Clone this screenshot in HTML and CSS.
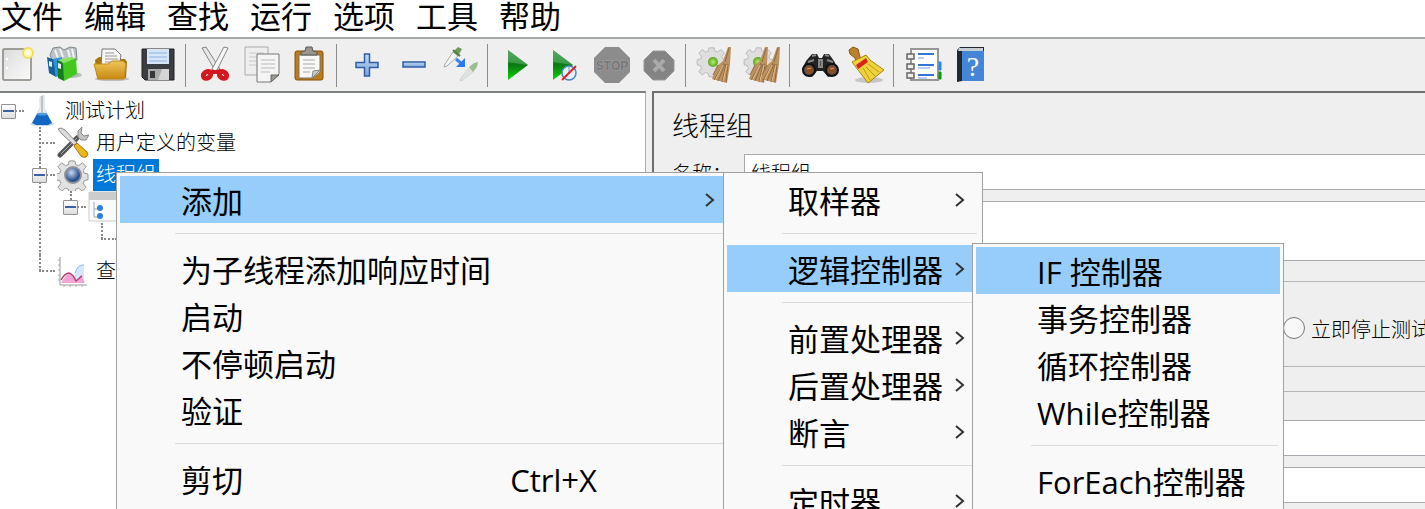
FILE: index.html
```
<!DOCTYPE html>
<html lang="zh-CN">
<head>
<meta charset="UTF-8" />
<meta name="viewport" content="width=device-width, initial-scale=1" />
<title>线程组</title>
<link rel="stylesheet" href="styles.css">
</head>
<body>

<!-- shared gradients and shapes -->
<svg class="defs" width="0" height="0" aria-hidden="true">
  <defs>
    <linearGradient id="paper" x1="0" y1="0" x2="1" y2="1"><stop offset="0" stop-color="#dcdcdc"/><stop offset="1" stop-color="#fbfbfb"/></linearGradient>
    <linearGradient id="gold" x1="0" y1="0" x2="0" y2="1"><stop offset="0" stop-color="#efc55c"/><stop offset="1" stop-color="#c98a10"/></linearGradient>
    <linearGradient id="green" x1="0" y1="0" x2="0" y2="1"><stop offset="0" stop-color="#3c9a4c"/><stop offset=".5" stop-color="#0a7a12"/><stop offset="1" stop-color="#08d808"/></linearGradient>
    <linearGradient id="blue" x1="0" y1="0" x2="0" y2="1"><stop offset="0" stop-color="#c3d9f2"/><stop offset="1" stop-color="#7ba7da"/></linearGradient>
    <radialGradient id="ball"><stop offset="0" stop-color="#b9ee6c"/><stop offset="1" stop-color="#57a51c"/></radialGradient>
    <radialGradient id="lens" cx=".4" cy=".35"><stop offset="0" stop-color="#c9d8ec"/><stop offset="1" stop-color="#27508f"/></radialGradient>
    <g id="gear">
      <path d="M13 1h6l1 4 3 1 4-3 4 4-3 4 1 3 4 1v6l-4 1-1 3 3 4-4 4-4-3-3 1-1 4h-6l-1-4-3-1-4 3-4-4 3-4-1-3-4-1v-6l4-1 1-3-3-4 4-4 4 3 3-1z"/>
    </g>
    <g id="twigs">
      <path d="M17 0l-5 14-6 5-5 13 15 4 3-19 1-17z" fill="#bd9261"/>
      <path d="M18 1l-4 14M13 16L3 33M14 17L7 34M15 17l-4 18M17 17l-2 18M7 18L2 28" stroke="#906a40" fill="none"/>
      <path d="M12 18L5 32M16 18l-4 16" stroke="#e1bd8c" fill="none"/>
    </g>
  </defs>
</svg>

<div class="app">
  <nav class="menubar">
    <button>文件</button>
    <button>编辑</button>
    <button>查找</button>
    <button>运行</button>
    <button>选项</button>
    <button>工具</button>
    <button>帮助</button>
  </nav>

  <div class="toolbar">
    <div class="group">
      <button aria-label="新建">
        <svg viewBox="0 0 36 36"><rect x="3" y="2" width="28" height="31" rx="1" fill="url(#paper)" stroke="#85857f" stroke-width="1.5"/><path d="M6 12h2M6 21h2" stroke="#fff" stroke-width="2"/><circle cx="28" cy="6" r="5" fill="#fff9b0" stroke="#f0e05e" stroke-width="2"/><circle cx="28" cy="6" r="2" fill="#fff"/></svg>
      </button>
      <button aria-label="模板">
        <svg viewBox="0 0 36 36"><ellipse cx="24" cy="28" rx="11" ry="3" fill="#bbb"/><path d="M3 8l3-7 7-1 4 3 6-3 6 1 1 12H5z" fill="#bcc3c7" stroke="#7d888d"/><path d="M8 3l3 8M13 2l3 8M21 3l2 8M25 2l2 9" stroke="#f4f4f4" stroke-width="2"/><path d="M0 10l8 3 1 17-7-4z" fill="#155f9c"/><path d="M6 12l9-2v18l-6 2z" fill="#3093da"/><path d="M10 13l7 3v18l-6-3z" fill="#19791d"/><path d="M16 16l13-5 1 16-13 7z" fill="#45c81d"/><path d="M11 16l3 1v5l-3-1zM2 14l3 1v5l-3-1z" fill="#dff0fa"/><path d="M17 16l12-5-6-1-12 3z" fill="#8be35f"/></svg>
      </button>
      <button aria-label="打开">
        <svg viewBox="0 0 36 36"><ellipse cx="18" cy="32" rx="17" ry="2" fill="#bbb"/><path d="M1 13l4-3h8l2 2h16l2 3-1 16H3z" fill="#a87713"/><path d="M8 2h13l6 6-2 14H7z" fill="#f6f6f6" stroke="#777"/><path d="M11 6h9M11 9h12M11 12h13M11 15h13" stroke="#999"/><path d="M0 17h14l4-3h11l3 3-2 15H4z" fill="url(#gold)" stroke="#c28a1b"/></svg>
      </button>
      <button aria-label="保存">
        <svg viewBox="0 0 36 36"><path d="M1 2h32v31H4l-3-3z" fill="#3a3d42" stroke="#222"/><rect x="6" y="2" width="22" height="15" fill="#d7e6f7"/><path d="M8 6h18M8 10h18M8 14h18" stroke="#8db1dc"/><rect x="7" y="22" width="21" height="11" fill="#aaa"/><path d="M17 33l4-11h7v11z" fill="#d5d5d5"/><rect x="9" y="24" width="5" height="7" fill="#34373c"/></svg>
      </button>
    </div>
    <span class="sep"></span>
    <div class="group">
      <button aria-label="剪切">
        <svg viewBox="0 0 36 36"><path d="M4 1l4-1 14 22-4 3z" fill="#e6e6e6" stroke="#858585"/><path d="M30 1l-4-1-12 22 4 3z" fill="#f6f6f6" stroke="#858585"/><ellipse cx="9" cy="28" rx="4" ry="3" transform="rotate(-35 9 28)" fill="#fff" stroke="#d31820" stroke-width="5"/><ellipse cx="25" cy="28" rx="4" ry="3" transform="rotate(35 25 28)" fill="#fff" stroke="#d31820" stroke-width="5"/><path d="M8 22l9 1 9-1-6 5h-6z" fill="#d31820"/></svg>
      </button>
      <button aria-label="复制">
        <svg viewBox="0 0 36 36"><path d="M0 0h23v28H0z" fill="#eee" stroke="#aaa"/><path d="M4 6h15M4 10h15M4 14h15M4 18h12" stroke="#c8c8c8"/><path d="M12 7h22v20l-8 8H12z" fill="#f5f5f5" stroke="#777"/><path d="M16 13h14M16 17h14M16 21h14M16 25h9" stroke="#bbb"/><path d="M26 35v-7h8z" fill="#9a9a92" stroke="#666"/></svg>
      </button>
      <button aria-label="粘贴">
        <svg viewBox="0 0 36 36"><rect x="3" y="4" width="28" height="29" rx="2" fill="#bd7b19" stroke="#84520a"/><path d="M7 8h21v17l-7 6H7z" fill="#f8f8f8" stroke="#777"/><path d="M9 8V5l4-1 1-4h6l1 4 4 1v3z" fill="#96968c" stroke="#5b5b55"/><path d="M11 13h12M11 17h12M11 21h12M11 25h7" stroke="#aaa"/><path d="M20 31l1-7 7-1z" fill="#ccc" stroke="#888"/></svg>
      </button>
    </div>
    <span class="sep"></span>
    <div class="group">
      <button aria-label="展开">
        <svg viewBox="0 0 36 36"><path d="M15.500 7h5v8.500H29v5h-8.500V29h-5v-8.500H7v-5h8.500z" fill="url(#blue)" stroke="#2c5fa8" stroke-width="1.500"/></svg>
      </button>
      <button aria-label="折叠">
        <svg viewBox="0 0 36 36"><rect x="7" y="15" width="22" height="5" fill="url(#blue)" stroke="#2c5fa8" stroke-width="1.500"/></svg>
      </button>
      <button aria-label="切换">
        <svg viewBox="0 0 36 36"><path d="M10 5l5 4L4 19l-3 1 1-3z" fill="#f5f5f5" stroke="#a5aaa5"/><path d="M10 5l5-5 4 2-4 7z" fill="#6f9b58"/><path d="M10 3l7 6" stroke="#587c47" stroke-width="2"/><path d="M13 12l6 5" stroke="#3b83f0" stroke-width="3"/><path d="M22 11v9h-9z" fill="#2d78ee"/><path d="M27 20l4 4-11 9-3 1 1-3z" fill="#e0e4e0" stroke="#d1d5d1"/><path d="M26 20l5-4 4-1-1 5-4 5z" fill="#9fbe90"/></svg>
      </button>
    </div>
    <span class="sep"></span>
    <div class="group">
      <button aria-label="启动">
        <svg viewBox="0 0 36 36"><path d="M8 3l20 15L8 33z" fill="url(#green)"/><path d="M8 3l20 15-20-3z" fill="#66b874" opacity=".5"/></svg>
      </button>
      <button aria-label="不停顿启动">
        <svg viewBox="0 0 36 36"><path d="M6 3l20 15L6 33z" fill="url(#green)"/><path d="M6 3l20 15-20-3z" fill="#66b874" opacity=".5"/><circle cx="22" cy="26" r="7" fill="#e9eff6" stroke="#4788bd" stroke-width="1.500"/><path d="M22 20v6l-4 3" fill="none" stroke="#6f9bc6"/><path d="M15 33l14-14" stroke="#e32222" stroke-width="2"/></svg>
      </button>
      <button aria-label="停止" disabled>
        <svg viewBox="0 0 36 36"><path d="M11 0h14l11 11v14L25 36H11L0 25V11z" fill="#8c8c8c"/><text x="18" y="23" text-anchor="middle" class="stop-text">STOP</text></svg>
      </button>
      <button aria-label="关闭" disabled>
        <svg viewBox="0 0 36 36"><path d="M12 4h12l9 9v11l-9 9H12l-9-9V13z" fill="#848484" stroke="#999"/><path d="M13 13l10 11M23 13L13 24" stroke="#aaa" stroke-width="4"/></svg>
      </button>
    </div>
    <span class="sep"></span>
    <div class="group">
      <button aria-label="清除">
        <svg viewBox="0 0 36 36"><use href="#gear" fill="#dedede" stroke="#b4b4b4" transform="scale(.85)"/><circle cx="15" cy="15" r="5" fill="url(#ball)"/><use href="#twigs" transform="translate(13 0)"/></svg>
      </button>
      <button aria-label="清除全部">
        <svg viewBox="0 0 36 36"><use href="#gear" fill="#dedede" stroke="#b4b4b4" transform="scale(.85)"/><circle cx="13" cy="15" r="5" fill="url(#ball)"/><use href="#twigs" transform="translate(3 0)"/><use href="#twigs" transform="translate(15 0)"/></svg>
      </button>
    </div>
    <span class="sep"></span>
    <div class="group">
      <button aria-label="搜索">
        <svg viewBox="0 0 36 36"><path d="M4 14l6-7h5l2 4h3l2-4h5l5 7 4 8-2 6-8 2-5-6h-6l-5 6-7-2-3-6z" fill="#222"/><path d="M10 9l4-1M23 8l4 1M6 15l6-2M25 13l6 2M17 13h3v7h-3z" stroke="#888" stroke-width="2" fill="#555"/><circle cx="7" cy="23" r="6" fill="#555" stroke="#111" stroke-width="2"/><circle cx="30" cy="23" r="6" fill="#555" stroke="#111" stroke-width="2"/><circle cx="7" cy="23" r="4" fill="#8a4d24"/><circle cx="30" cy="23" r="4" fill="#8a4d24"/><path d="M5 22l4-1M28 22l4-1" stroke="#d69a6d"/></svg>
      </button>
      <button aria-label="清空搜索">
        <svg viewBox="0 0 36 36"><ellipse cx="20" cy="33" rx="14" ry="3" fill="#c5c5c5"/><path d="M0 3l4-3 5 2 2 8 3 5-5 3-3-7-5-4z" fill="#bc812b" stroke="#845510"/><path d="M3 15l14-7 4 5 14 10-16 13z" fill="#eed23b" stroke="#a88709"/><path d="M17 20l9 9M19 17l11 8M14 21l7 12" stroke="#bc9b17"/><path d="M7 18l10-7 2 4-10 7z" fill="#d92323"/></svg>
      </button>
    </div>
    <span class="sep"></span>
    <div class="group">
      <button aria-label="函数助手">
        <svg viewBox="0 0 36 36"><path d="M5 2h27v31H5z" fill="#fdfdfd" stroke="#969696" stroke-width="2"/><path d="M33 15h2v8h-2z" fill="#2f86ef" stroke="#2f86ef"/><path d="M33 25h2v7h-2z" fill="#11950c" stroke="#11950c"/><path d="M12 7h16M12 18h16M12 28h16" stroke="#3474d8" stroke-width="2"/><path d="M12 11h6M12 21h12M12 31h9" stroke="#73a1e8"/><g fill="#eee" stroke="#666" stroke-width="1.500"><path d="M8 7H1v5h7z"/><path d="M8 17H1v5h7z"/><path d="M8 26H1v5h7z"/></g></svg>
      </button>
      <button aria-label="帮助">
        <svg viewBox="0 0 36 36"><path d="M4 3l3-3h24v4L9 34l-5 1z" fill="#20272f"/><path d="M6 1h24v3H5z" fill="#c5ced6"/><path d="M9 4h22v30H9z" fill="#4585d8"/><path d="M9 4H4v29l5 1z" fill="#202830"/><text x="20" y="29" text-anchor="middle" class="help-text">?</text></svg>
      </button>
    </div>
  </div>

  <div class="workspace">
    <aside class="tree">
      <ul class="root">
        <li>
          <div class="row">
            <button class="twisty" aria-label="折叠"></button>
            <svg viewBox="0 0 32 32"><ellipse cx="16" cy="29" rx="12" ry="2" fill="#c3d8ec"/><path d="M14 2l4-2v13l8 16H6l8-16z" fill="#edf0f3" stroke="#d5d9de"/><path d="M11 19h10l5 9-4 2H10l-4-2z" fill="#1265c0"/><ellipse cx="16" cy="19" rx="5" ry="1.500" fill="#559be0"/><path d="M16 1v17" stroke="#bdc3ca" stroke-width="2"/></svg>
            <span class="label">测试计划</span>
          </div>
          <ul>
            <li>
              <div class="row">
                <svg viewBox="0 0 32 32"><path d="M3 28L20 11" stroke="#555" stroke-width="5" stroke-linecap="round"/><path d="M4 27L20 11" stroke="#aaa" stroke-width="1"/><path d="M25 0l-4 4v6l3 3h5l3-5-5 1-3-3z" fill="#c4c4c4" stroke="#888"/><path d="M1 2l3-1 4 2 12 13-3 2L5 7z" fill="#ddd" stroke="#888"/><path d="M20 16l10 9q2 3-1 5-3 1-5-1l-7-10z" fill="#efb41e" stroke="#a67809"/></svg>
                <span class="label">用户定义的变量</span>
              </div>
            </li>
            <li>
              <div class="row">
                <button class="twisty" aria-label="折叠"></button>
                <svg viewBox="0 0 32 32"><use href="#gear" fill="#e2e2e2" stroke="#909090" transform="translate(0 1) scale(.94)"/><circle cx="16" cy="16" r="8" fill="url(#lens)" stroke="#8f9298" stroke-width="2"/></svg>
                <span class="label selected">线程组</span>
              </div>
              <ul>
                <li>
                  <div class="row">
                    <button class="twisty" aria-label="折叠"></button>
                    <svg viewBox="0 0 32 32"><path d="M1 1h31v29H1z" fill="#fafafa" stroke="#ccc"/><path d="M1 1h31v8H1z" fill="#ccc"/><path d="M6 11v15h4M6 18h4" fill="none" stroke="#9ab"/><circle cx="12" cy="17" r="3" fill="#2e82d6"/><circle cx="12" cy="25" r="3" fill="#2e82d6"/></svg>
                  </div>
                  <ul>
                    <li><div class="row"></div></li>
                  </ul>
                </li>
              </ul>
            </li>
            <li>
              <div class="row">
                <svg viewBox="0 0 32 32"><path d="M3 2v28h27" fill="none" stroke="#999"/><path d="M1 5h2M1 10h2M1 15h2M1 20h2M1 25h2M7 30v2M13 30v2M19 30v2M25 30v2" stroke="#aaa"/><path d="M18 27V16q3-7 9-6v17z" fill="#d3e8fc"/><path d="M18 18q3-9 9-8" fill="none" stroke="#8ebfec"/><path d="M4 28q4-7 7-9 4-2 8 6 3-1 5-6l4 9z" fill="#f4a5d8"/><path d="M4 25q4-7 8-7 4 1 7 8l6-5" fill="none" stroke="#b64670" stroke-width="1.500"/></svg>
                <span class="label">查</span>
              </div>
            </li>
          </ul>
        </li>
      </ul>
    </aside>

    <main class="panel">
      <h1>线程组</h1>
      <div class="field">
        <label for="name">名称：</label>
        <input id="name" type="text" value="线程组">
      </div>
      <textarea class="comments" aria-label="注释"></textarea>
      <div class="actions">
        <label><input type="radio" name="on-error"> 立即停止测试</label>
      </div>
      <div class="props">
        <input type="text" aria-label="线程数">
        <input type="text" aria-label="Ramp-Up">
      </div>
    </main>
  </div>
</div>

<div class="menu menu-main">
  <button class="item active">添加<svg class="arrow" viewBox="0 0 10 16"><path d="M1 2l7 6-7 6"/></svg></button>
  <hr>
  <button class="item">为子线程添加响应时间</button>
  <button class="item">启动</button>
  <button class="item">不停顿启动</button>
  <button class="item">验证</button>
  <hr>
  <button class="item">剪切<span class="shortcut">Ctrl+X</span></button>
</div>

<div class="menu menu-add">
  <button class="item">取样器<svg class="arrow" viewBox="0 0 10 16"><path d="M1 2l7 6-7 6"/></svg></button>
  <hr>
  <button class="item active">逻辑控制器<svg class="arrow" viewBox="0 0 10 16"><path d="M1 2l7 6-7 6"/></svg></button>
  <hr>
  <button class="item">前置处理器<svg class="arrow" viewBox="0 0 10 16"><path d="M1 2l7 6-7 6"/></svg></button>
  <button class="item">后置处理器<svg class="arrow" viewBox="0 0 10 16"><path d="M1 2l7 6-7 6"/></svg></button>
  <button class="item">断言<svg class="arrow" viewBox="0 0 10 16"><path d="M1 2l7 6-7 6"/></svg></button>
  <hr>
  <button class="item">定时器<svg class="arrow" viewBox="0 0 10 16"><path d="M1 2l7 6-7 6"/></svg></button>
</div>

<div class="menu menu-logic">
  <button class="item active">IF 控制器</button>
  <button class="item">事务控制器</button>
  <button class="item">循环控制器</button>
  <button class="item">While控制器</button>
  <hr>
  <button class="item">ForEach控制器</button>
</div>

</body>
</html>
```
FILE: styles.css
```
* {
  box-sizing: border-box;
}
body {
  margin: 0;
  height: 100vh;
  position: relative;
  overflow: hidden;
  background: #efefef;
  color: #000;
  font-family: "Open Sans", "Noto Sans CJK SC", sans-serif;
  font-size: 20px;
}
button {
  padding: 0;
  border: none;
  background: none;
  color: inherit;
  font: inherit;
}
.defs {
  position: absolute;
}
.app {
  display: flex;
  flex-direction: column;
  height: 100%;
}

/* menu bar */
.menubar {
  display: flex;
  gap: 21px;
  height: 37px;
  padding-left: 1px;
  background: #fff;
}
.menubar button {
  font-size: 31px;
  line-height: 32px;
  height: 32px;
}

/* toolbar */
.toolbar {
  display: flex;
  align-items: center;
  height: 54px;
  border-top: 2px solid #a5a9a5;
  background: #efefef;
}
.group {
  display: flex;
  gap: 11px;
}
.group button {
  width: 36px;
  height: 36px;
}
.group svg {
  display: block;
  width: 36px;
  height: 36px;
  overflow: visible;
}
.sep {
  width: 1px;
  height: 43px;
  margin: 0 12px 0 8px;
  background: #8c8c8c;
}
.stop-text {
  font: bold 12px "Liberation Sans", sans-serif;
  fill: #777;
  stroke: #a2a2a2;
  stroke-width: 1px;
  paint-order: stroke;
}
.help-text {
  font: 28px "Liberation Serif", serif;
  fill: #fff;
}

/* tree */
.workspace {
  display: flex;
  flex: 1;
  gap: 6px;
  min-height: 0;
}
.tree {
  flex: 0 0 646px;
  border-top: 2px solid #7c8080;
  border-right: 1px solid #aaaab2;
  background: #fff;
  padding-top: 2px;
}
.tree ul {
  margin: 0;
  padding: 0 0 0 31px;
  list-style: none;
}
.tree .root {
  padding: 0;
}
.tree li {
  position: relative;
}
.tree ul ul > li::before {
  content: "";
  position: absolute;
  left: 8px;
  top: 0;
  bottom: 0;
  border-left: 2px dotted #888;
}
.tree ul ul > li:last-child::before {
  bottom: auto;
  height: 16px;
}
.row {
  display: flex;
  align-items: center;
  position: relative;
  height: 32px;
  padding-left: 26px;
}
.row::before {
  content: "";
  position: absolute;
  left: 8px;
  top: 15px;
  width: 16px;
  border-top: 2px dotted #888;
}
.row svg {
  position: relative;
  width: 32px;
  height: 32px;
  margin-right: 4px;
}
.twisty {
  position: relative;
  width: 15px;
  height: 15px;
  margin: 0 10px 0 -25px;
  border: 1px solid #929292;
  border-radius: 1px;
  background: linear-gradient(#3c5fa8, #3c5fa8) center / 11px 2px no-repeat, linear-gradient(#fff, #ddd);
}
.label {
  padding: 0 3px;
  line-height: 32px;
  font-weight: 300;
}
.selected {
  background: #0078d7;
  color: #fff;
}

/* right panel */
.panel {
  flex: 1;
  min-width: 0;
  overflow: hidden;
  border-top: 2px solid #6e6e6e;
  border-left: 2px solid #6e6e6e;
}
.panel h1 {
  margin: 0;
  padding: 13px 0 9px 18px;
  font-size: 27px;
  line-height: 39px;
  font-weight: 300;
}
.field {
  display: flex;
  align-items: center;
  padding-left: 18px;
  font-weight: 300;
}
.field label {
  width: 72px;
}
.panel input[type="text"],
.comments {
  display: block;
  height: 36px;
  border: 1px solid #a9a9b0;
  border-right: none;
  border-radius: 0;
  background: #fff;
  padding: 0 6px;
  font: inherit;
}
.field input[type="text"] {
  flex: 1;
  min-width: 0;
}
.panel .comments {
  width: 100%;
  height: 60px;
  margin-top: 11px;
  resize: none;
}
.actions {
  display: flex;
  align-items: center;
  height: 86px;
  margin: 20px 0 24px;
  padding: 8px 0 0 628px;
  border: 1px solid #b5b5b5;
  border-right: none;
  overflow: hidden;
  white-space: nowrap;
}
.actions label {
  display: flex;
  align-items: center;
  gap: 6px;
  font-weight: 300;
}
.actions input {
  appearance: none;
  flex: none;
  width: 22px;
  height: 22px;
  margin: 0;
  border: 1px solid #777;
  border-radius: 50%;
  background: #f8f8f8;
}
.props {
  display: flex;
  flex-direction: column;
  gap: 11px;
  padding: 28px 0 20px;
  border-top: 1px solid #b5b5b5;
}
.panel .props input {
  width: 100%;
}

/* popup menus */
.menu {
  position: absolute;
  bottom: 0;
  padding: 3px;
  border: 1px solid #a0a0a0;
  border-bottom: none;
  background: #f9f9f9;
}
.menu-main {
  left: 116px;
  top: 172px;
  width: 608px;
  padding-right: 0;
}
.menu-add {
  left: 723px;
  top: 172px;
  width: 260px;
}
.menu-logic {
  left: 972px;
  top: 243px;
  width: 312px;
}
.item {
  display: flex;
  align-items: center;
  width: 100%;
  height: 47px;
  padding: 4px 14px 0 61px;
  font-size: 31px;
  line-height: 43px;
  text-align: left;
  white-space: nowrap;
}
.item.active {
  background: #96cdfb;
}
.menu hr {
  height: 1px;
  margin: 10px 2px 11px 55px;
  border: none;
  background: #dadada;
}
.menu-main hr {
  margin-right: 0;
}
.arrow {
  width: 10px;
  height: 16px;
  margin: 0 0 4px auto;
  fill: none;
  stroke: #333;
  stroke-width: 2;
}
.menu-main .arrow {
  margin-right: -6px;
}
.shortcut {
  margin-left: auto;
  margin-right: 112px;
}
```
